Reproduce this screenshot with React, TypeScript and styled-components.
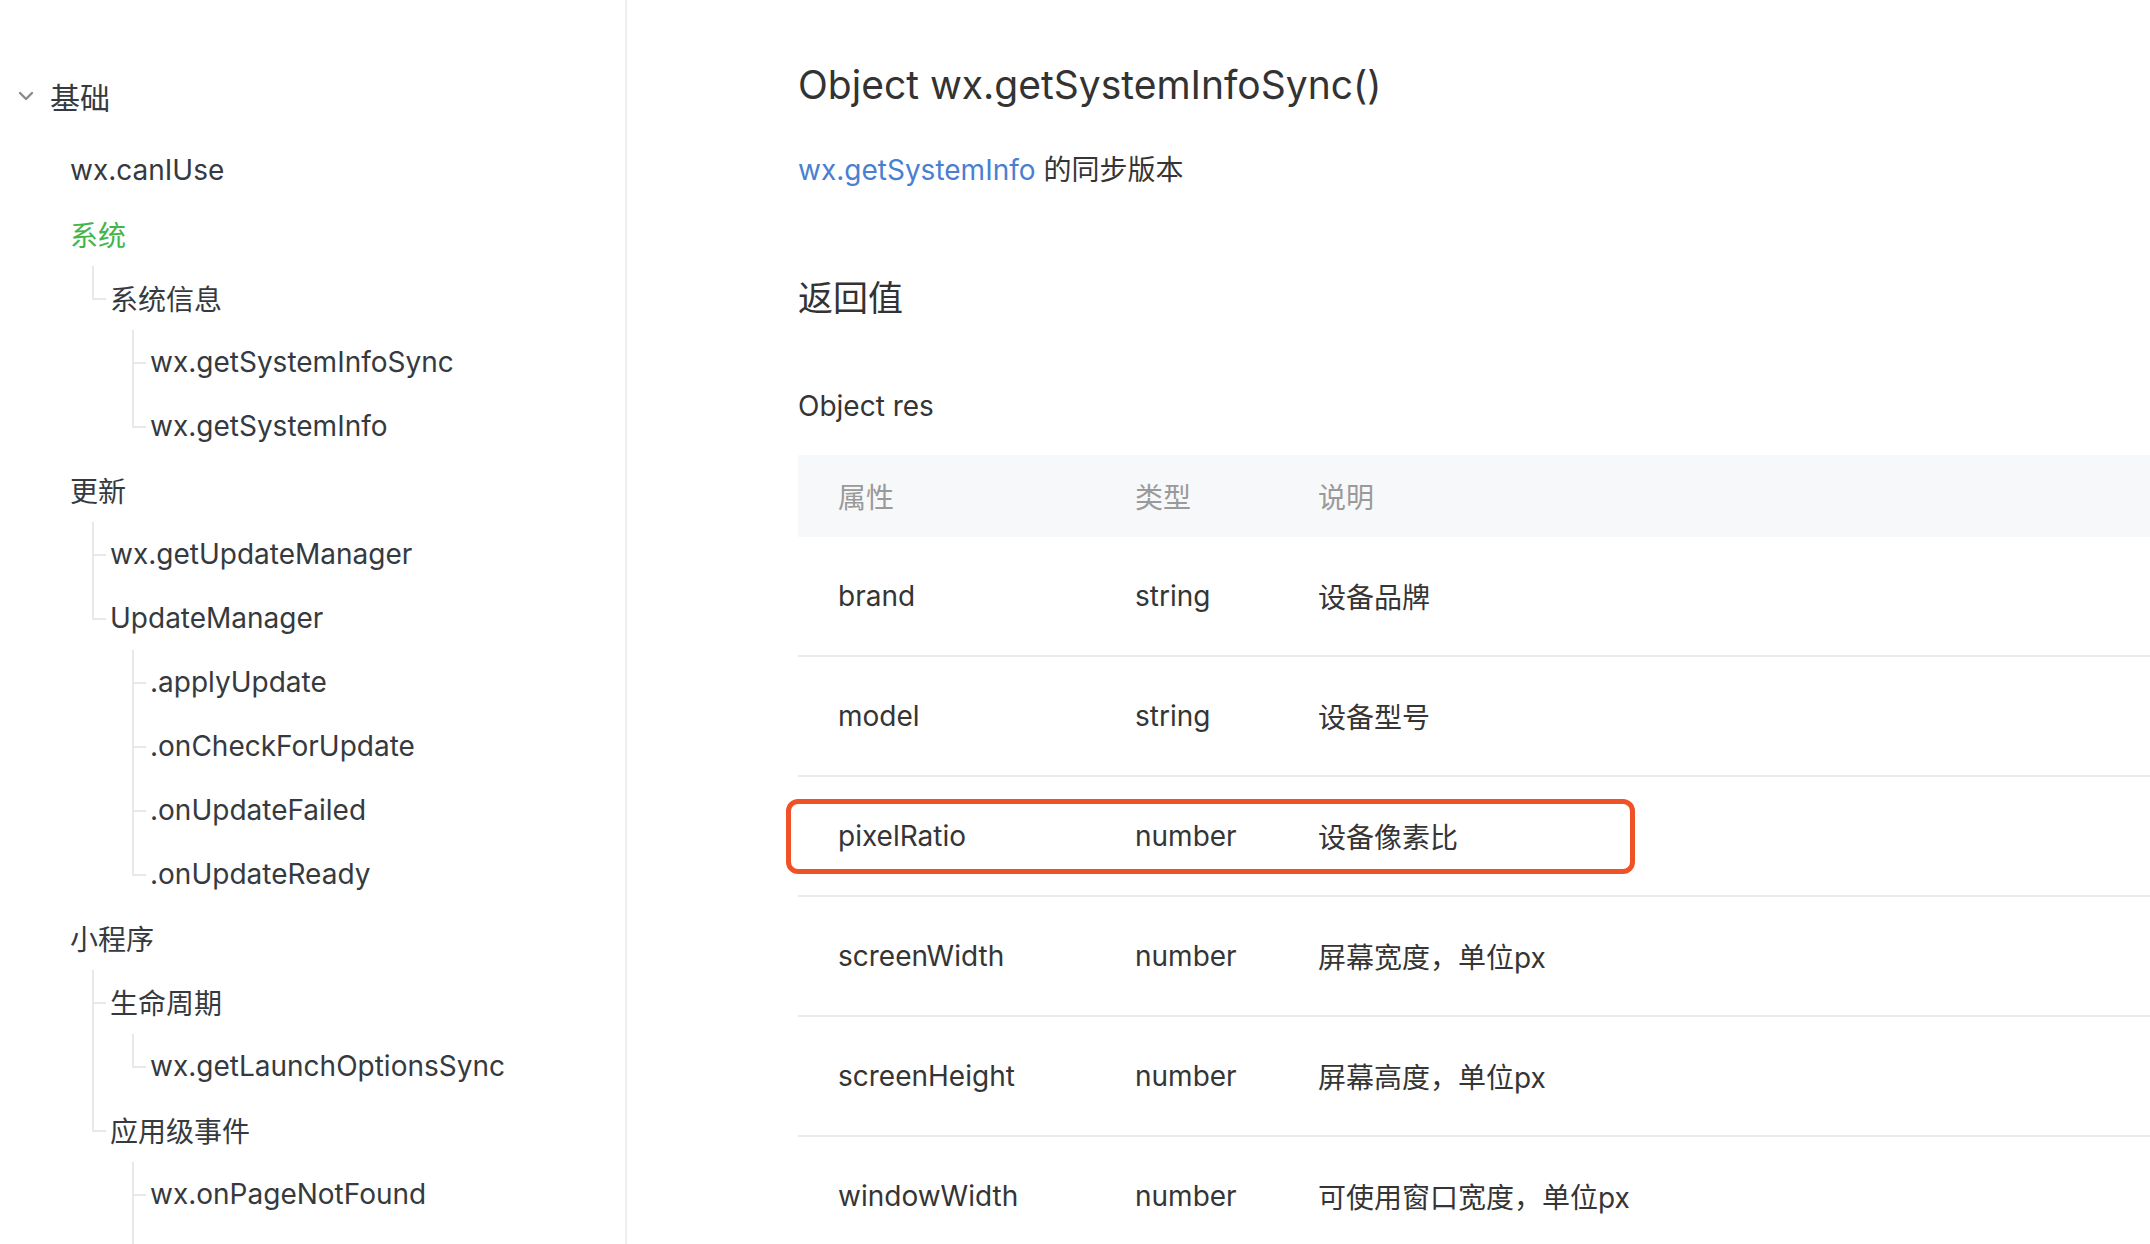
import React from "react";
import styled, { createGlobalStyle, css } from "styled-components";

const Global = createGlobalStyle`
  html, body { margin: 0; padding: 0; background: #fff; }
  body {
    font-family: Inter, "Noto Sans CJK SC", sans-serif;
    color: #353535;
    -webkit-font-smoothing: antialiased;
  }
`;

const Page = styled.div`
  display: flex;
  width: 2150px;
  height: 1244px;
  overflow: hidden;
`;

const Sidebar = styled.nav`
  flex: 0 0 627px;
  border-right: 2px solid #eeeeee;
  padding-top: 64px;
  box-sizing: border-box;
`;

const SectionHead = styled.div`
  display: flex;
  align-items: center;
  height: 64px;
  padding-left: 18px;
  gap: 16px;
  font-size: 30px;
  color: #353a40;
`;

const Tree = styled.ul`
  list-style: none;
  margin: 10px 0 0;
  padding: 0 0 0 70px;
`;

const Children = styled.ul`
  list-style: none;
  margin: 0;
  padding: 0 0 0 40px;
`;

const lineColor = "#e8e8e8";

const Node = styled.li<{ $branch: boolean; $last: boolean }>`
  position: relative;
  ${(p) =>
    p.$branch &&
    !p.$last &&
    css`
      &::before {
        content: "";
        position: absolute;
        left: -18px;
        top: 0;
        bottom: 0;
        border-left: 2px solid ${lineColor};
      }
    `}
`;

const Label = styled.div<{ $branch: boolean; $active?: boolean }>`
  position: relative;
  height: 64px;
  display: flex;
  align-items: center;
  font-size: 28px;
  white-space: nowrap;
  color: ${(p) => (p.$active ? "#44b549" : "#353a40")};
  ${(p) =>
    p.$branch &&
    css`
      &::before {
        content: "";
        position: absolute;
        left: -18px;
        top: 0;
        height: 50%;
        width: 12px;
        border-left: 2px solid ${lineColor};
        border-bottom: 2px solid ${lineColor};
      }
    `}
`;

const Tail = styled.li`
  height: 64px;
  margin-left: -18px;
  border-left: 2px solid ${lineColor};
`;

type Item = { label: string; active?: boolean; more?: boolean; children?: Item[] };

const nav: Item[] = [
  { label: "wx.canIUse" },
  {
    label: "系统",
    active: true,
    children: [
      {
        label: "系统信息",
        children: [{ label: "wx.getSystemInfoSync" }, { label: "wx.getSystemInfo" }],
      },
    ],
  },
  {
    label: "更新",
    children: [
      { label: "wx.getUpdateManager" },
      {
        label: "UpdateManager",
        children: [
          { label: ".applyUpdate" },
          { label: ".onCheckForUpdate" },
          { label: ".onUpdateFailed" },
          { label: ".onUpdateReady" },
        ],
      },
    ],
  },
  {
    label: "小程序",
    children: [
      { label: "生命周期", children: [{ label: "wx.getLaunchOptionsSync" }] },
      {
        label: "应用级事件",
        more: true,
        children: [{ label: "wx.onPageNotFound" }],
      },
    ],
  },
];

function renderNodes(items: Item[], branch: boolean, more = false): React.ReactNode {
  return (
    <>
      {items.map((it, i) => (
        <Node key={it.label} $branch={branch} $last={i === items.length - 1 && !more}>
          <Label $branch={branch} $active={it.active}>
            {it.label}
          </Label>
          {it.children && <Children>{renderNodes(it.children, true, it.more)}</Children>}
        </Node>
      ))}
      {more && <Tail />}
    </>
  );
}

const Chevron = () => (
  <svg width="16" height="10" viewBox="0 0 16 10" fill="none">
    <path d="M2 2l6 6 6-6" stroke="#8a8a8a" strokeWidth="2.4" strokeLinecap="round" strokeLinejoin="round" />
  </svg>
);

const Main = styled.main`
  flex: 1;
  padding: 57px 0 0 171px;
  min-width: 0;
`;

const Title = styled.h1`
  margin: 0;
  font-size: 39px;
  font-weight: 400;
  line-height: 56px;
  color: #333;
  white-space: nowrap;
`;

const Lead = styled.p`
  margin: 37px 0 0;
  font-size: 28px;
  line-height: 40px;
  color: #353535;
`;

const Link = styled.a`
  color: #4a7fd0;
  text-decoration: none;
`;

const SubTitle = styled.h2`
  margin: 83px 0 0;
  font-size: 35px;
  font-weight: 400;
  line-height: 50px;
  color: #333;
`;

const Caption = styled.div`
  margin-top: 63px;
  font-size: 28px;
  line-height: 40px;
  color: #353535;
`;

const Table = styled.div`
  margin-top: 29px;
  width: 1500px;
`;

const Row = styled.div<{ $head?: boolean }>`
  position: relative;
  display: grid;
  grid-template-columns: 297px 183px 1fr;
  align-items: center;
  height: ${(p) => (p.$head ? "82px" : "118px")};
  background: ${(p) => (p.$head ? "#f7f8fa" : "#fff")};
  border-bottom: ${(p) => (p.$head ? "none" : "2px solid #ebebeb")};
  font-size: 28px;
  color: ${(p) => (p.$head ? "#9a9a9a" : "#353535")};
`;

const Cell = styled.div`
  padding-left: 40px;
  white-space: nowrap;
`;

const Highlight = styled.div`
  position: absolute;
  left: -12px;
  top: 22px;
  width: 849px;
  height: 75px;
  box-sizing: border-box;
  border: 5px solid #f05227;
  border-radius: 12px;
  pointer-events: none;
`;

const rows = [
  { name: "brand", type: "string", desc: "设备品牌" },
  { name: "model", type: "string", desc: "设备型号" },
  { name: "pixelRatio", type: "number", desc: "设备像素比", mark: true },
  { name: "screenWidth", type: "number", desc: "屏幕宽度，单位px" },
  { name: "screenHeight", type: "number", desc: "屏幕高度，单位px" },
  { name: "windowWidth", type: "number", desc: "可使用窗口宽度，单位px" },
];

export default function App() {
  return (
    <>
      <Global />
      <Page>
        <Sidebar>
          <SectionHead>
            <Chevron />
            <span>基础</span>
          </SectionHead>
          <Tree>{renderNodes(nav, false)}</Tree>
        </Sidebar>
        <Main>
          <Title>Object wx.getSystemInfoSync()</Title>
          <Lead>
            <Link href="#">wx.getSystemInfo</Link> 的同步版本
          </Lead>
          <SubTitle>返回值</SubTitle>
          <Caption>Object res</Caption>
          <Table>
            <Row $head>
              <Cell>属性</Cell>
              <Cell>类型</Cell>
              <Cell>说明</Cell>
            </Row>
            {rows.map((r) => (
              <Row key={r.name}>
                <Cell>{r.name}</Cell>
                <Cell>{r.type}</Cell>
                <Cell>{r.desc}</Cell>
                {r.mark && <Highlight />}
              </Row>
            ))}
          </Table>
        </Main>
      </Page>
    </>
  );
}
